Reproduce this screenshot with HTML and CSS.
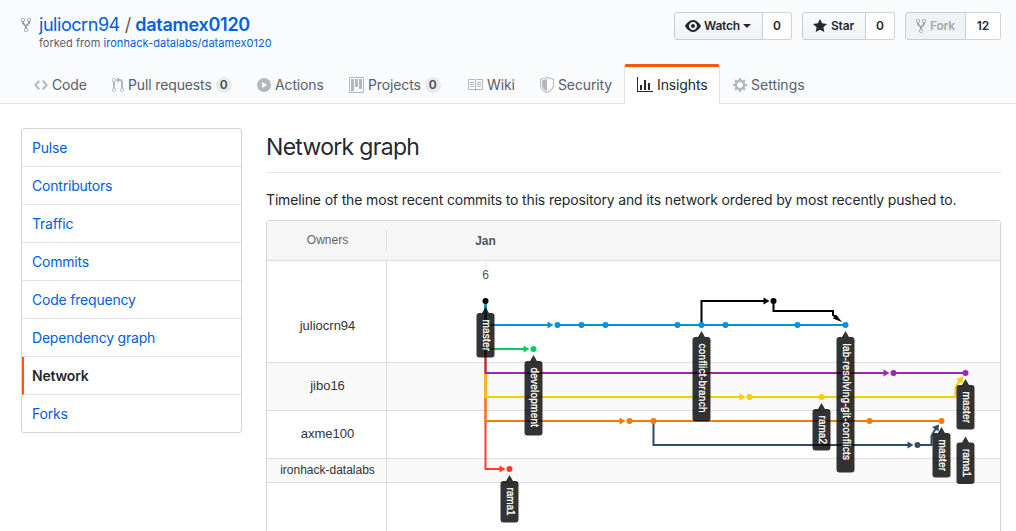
FILE: index.html
```html
<!DOCTYPE html>
<html lang="en">
<head>
<meta charset="utf-8">
<title>Network graph · juliocrn94/datamex0120</title>
<link rel="stylesheet" href="styles.css">
</head>
<body>
<header class="pagehead">
  <div class="repo-row">
    <div class="repo-title">
      <svg class="icon repo-icon" width="10" height="16" viewBox="0 0 10 16"><path fill-rule="evenodd" d="M8 1a1.993 1.993 0 0 0-1 3.72V6L5 8 3 6V4.72A1.993 1.993 0 0 0 2 1a1.993 1.993 0 0 0-1 3.72V6.5l3 3v1.78A1.993 1.993 0 0 0 5 15a1.993 1.993 0 0 0 1-3.72V9.5l3-3V4.72A1.993 1.993 0 0 0 8 1zM2 4.2C1.34 4.2.8 3.65.8 3c0-.65.55-1.2 1.2-1.2.65 0 1.2.55 1.2 1.2 0 .65-.55 1.2-1.2 1.2zm3 10c-.66 0-1.2-.55-1.2-1.2 0-.65.55-1.2 1.2-1.2.65 0 1.2.55 1.2 1.2 0 .65-.55 1.2-1.2 1.2zm3-10c-.66 0-1.2-.55-1.2-1.2 0-.65.55-1.2 1.2-1.2.65 0 1.2.55 1.2 1.2 0 .65-.55 1.2-1.2 1.2z"/></svg>
      <div>
        <h1 class="repo-name"><a class="owner">juliocrn94</a><span class="slash">/</span><a class="name">datamex0120</a></h1>
        <div class="forked">forked from <a>ironhack-datalabs/datamex0120</a></div>
      </div>
    </div>
    <div class="actions">
      <div class="btn-group">
        <span class="btn btn-watch"><svg class="icon" width="16" height="16" viewBox="0 0 16 16"><path fill-rule="evenodd" d="M8.06 2C3 2 0 8 0 8s3 6 8.06 6C13 14 16 8 16 8s-3-6-7.94-6zM8 12c-2.2 0-4-1.78-4-4 0-2.2 1.8-4 4-4 2.22 0 4 1.8 4 4 0 2.22-1.78 4-4 4zm2-4c0 1.11-.89 2-2 2-1.11 0-2-.89-2-2 0-1.11.89-2 2-2 1.11 0 2 .89 2 2z"/></svg><span>Watch</span><i class="caret"></i></span><span class="count">0</span>
      </div>
      <div class="btn-group">
        <span class="btn btn-star"><svg class="icon" width="14" height="16" viewBox="0 0 14 16"><path d="M14 6l-4.9-.64L7 1 4.9 5.36 0 6l3.6 3.26L2.67 14 7 11.67 11.33 14l-.93-4.74L14 6z"/></svg><span>Star</span></span><span class="count">0</span>
      </div>
      <div class="btn-group">
        <span class="btn btn-fork"><svg class="icon" width="10" height="16" viewBox="0 0 10 16"><path fill-rule="evenodd" d="M8 1a1.993 1.993 0 0 0-1 3.72V6L5 8 3 6V4.72A1.993 1.993 0 0 0 2 1a1.993 1.993 0 0 0-1 3.72V6.5l3 3v1.78A1.993 1.993 0 0 0 5 15a1.993 1.993 0 0 0 1-3.72V9.5l3-3V4.72A1.993 1.993 0 0 0 8 1zM2 4.2C1.34 4.2.8 3.65.8 3c0-.65.55-1.2 1.2-1.2.65 0 1.2.55 1.2 1.2 0 .65-.55 1.2-1.2 1.2zm3 10c-.66 0-1.2-.55-1.2-1.2 0-.65.55-1.2 1.2-1.2.65 0 1.2.55 1.2 1.2 0 .65-.55 1.2-1.2 1.2zm3-10c-.66 0-1.2-.55-1.2-1.2 0-.65.55-1.2 1.2-1.2.65 0 1.2.55 1.2 1.2 0 .65-.55 1.2-1.2 1.2z"/></svg><span>Fork</span></span><span class="count count-wide">12</span>
      </div>
    </div>
  </div>
  <nav class="tabs">
    <a class="tab tab-code"><svg class="icon" width="14" height="16" viewBox="0 0 14 16"><path d="M9.5 3L8 4.5 11.5 8 8 11.5 9.5 13 14 8 9.5 3zm-5 0L0 8l4.5 5L6 11.5 2.5 8 6 4.5 4.5 3z"/></svg><span>Code</span></a>
    <a class="tab tab-pulls"><svg class="icon" width="12" height="16" viewBox="0 0 12 16"><path fill-rule="evenodd" d="M11 11.28V5c-.03-.78-.34-1.47-.94-2.06C9.46 2.35 8.78 2.03 8 2H7V0L4 3l3 3V4h1c.27.02.48.11.69.31.21.2.3.42.31.69v6.28A1.993 1.993 0 0 0 10 15a1.993 1.993 0 0 0 1-3.72zm-1 2.92c-.66 0-1.2-.55-1.2-1.2 0-.65.55-1.2 1.2-1.2.65 0 1.2.55 1.2 1.2 0 .65-.55 1.2-1.2 1.2zM4 3c0-1.11-.89-2-2-2a1.993 1.993 0 0 0-1 3.72v6.56A1.993 1.993 0 0 0 2 15a1.993 1.993 0 0 0 1-3.72V4.72c.59-.34 1-.98 1-1.72zm-.8 10c0 .66-.55 1.2-1.2 1.2-.65 0-1.2-.55-1.2-1.2 0-.65.55-1.2 1.2-1.2.65 0 1.2.55 1.2 1.2zM2 4.2C1.34 4.2.8 3.65.8 3c0-.65.55-1.2 1.2-1.2.65 0 1.2.55 1.2 1.2 0 .65-.55 1.2-1.2 1.2z"/></svg><span>Pull requests</span><b class="counter">0</b></a>
    <a class="tab tab-actions"><svg class="icon" width="14" height="16" viewBox="0 0 14 16"><path fill-rule="evenodd" d="M14 8A7 7 0 1 1 0 8a7 7 0 0 1 14 0zM5 5v6l5.2-3z"/></svg><span>Actions</span></a>
    <a class="tab tab-projects"><svg class="icon" width="15" height="16" viewBox="0 0 15 16"><path fill-rule="evenodd" d="M10 12h3V2h-3v10zm-4-2h3V2H6v8zm-4 4h3V2H2v12zm-1 1h13V1H1v14zM14 0H1a1 1 0 0 0-1 1v14a1 1 0 0 0 1 1h13a1 1 0 0 0 1-1V1a1 1 0 0 0-1-1z"/></svg><span>Projects</span><b class="counter">0</b></a>
    <a class="tab tab-wiki"><svg class="icon" width="16" height="16" viewBox="0 0 16 16"><path fill-rule="evenodd" d="M3 5h4v1H3V5zm0 3h4V7H3v1zm0 2h4V9H3v1zm11-5h-4v1h4V5zm0 2h-4v1h4V7zm0 2h-4v1h4V9zm2-6v9c0 .55-.45 1-1 1H9.5l-1 1-1-1H2c-.55 0-1-.45-1-1V3c0-.55.45-1 1-1h5.5l1 1 1-1H15c.55 0 1 .45 1 1zm-8 .5L7.5 3H2v9h6V3.5zm7-.5H9.5l-.5.5V12h6V3z"/></svg><span>Wiki</span></a>
    <a class="tab tab-security"><svg class="icon" width="14" height="16" viewBox="0 0 14 16"><path fill-rule="evenodd" d="M0 2l7-2 7 2v6.02C14 12.69 8.69 16 7 16c-1.69 0-7-3.31-7-7.98V2zm1 .75L7 1l6 1.75v5.268C13 12.104 8.449 15 7 15c-1.449 0-6-2.896-6-6.982V2.75zm1 .75L7 2v12c-1.207 0-5-2.482-5-5.985V3.5z"/></svg><span>Security</span></a>
    <a class="tab tab-insights selected"><svg class="icon" width="16" height="16" viewBox="0 0 16 16"><path d="M16 14v1H0V0h1v14h15zM5 13H3V8h2v5zm4 0H7V3h2v10zm4 0h-2V6h2v7z"/></svg><span>Insights</span></a>
    <a class="tab tab-settings"><svg class="icon" width="14" height="16" viewBox="0 0 14 16"><path fill-rule="evenodd" d="M14 8.77v-1.6l-1.94-.64-.45-1.09.88-1.84-1.13-1.13-1.81.91-1.09-.45-.69-1.92h-1.6l-.63 1.94-1.11.45-1.84-.88-1.13 1.13.91 1.81-.45 1.09L0 7.23v1.59l1.94.64.45 1.09-.88 1.84 1.13 1.13 1.81-.91 1.09.45.69 1.92h1.59l.63-1.94 1.11-.45 1.84.88 1.13-1.13-.92-1.81.47-1.09L14 8.75v.02zM7 11c-1.66 0-3-1.34-3-3s1.34-3 3-3 3 1.34 3 3-1.34 3-3 3z"/></svg><span>Settings</span></a>
  </nav>
</header>
<main class="content">
  <nav class="menu">
    <a class="menu-item">Pulse</a>
    <a class="menu-item">Contributors</a>
    <a class="menu-item">Traffic</a>
    <a class="menu-item">Commits</a>
    <a class="menu-item">Code frequency</a>
    <a class="menu-item">Dependency graph</a>
    <a class="menu-item current">Network</a>
    <a class="menu-item">Forks</a>
  </nav>
  <section class="main">
    <h2 class="heading">Network graph</h2>
    <p class="lead">Timeline of the most recent commits to this repository and its network ordered by most recently pushed to.</p>
    <div class="network">
      <div class="net-head"><span class="owners">Owners</span><span class="month">Jan</span></div>
      <div class="net-body">
        <div class="lane lane-5"><span class="lane-owner">juliocrn94</span></div>
        <div class="lane lane-2 shaded"><span class="lane-owner">jibo16</span></div>
        <div class="lane lane-2"><span class="lane-owner">axme100</span></div>
        <div class="lane lane-1 shaded"><span class="lane-owner small">ironhack-datalabs</span></div>
        <div class="lane lane-rest"><span class="lane-owner"></span></div>
        <svg class="canvas" width="613" height="270" viewBox="387 261 613 270">
          <rect x="485" y="261" width="2" height="6" fill="#eee"/>
          <text class="day" x="485.5" y="279" text-anchor="middle">6</text>
          <g class="line">
            <path stroke="#ff3b2a" d="M485.5 301V469H502"/>
            <path stroke="#f57c00" d="M485.5 301V421H622M629 421H941"/>
            <path stroke="#f9cb00" d="M485.5 301V397H742M749 397H955.5V388L960 380"/>
            <path stroke="#9c27b0" d="M485.5 301V373H886M893 373H965"/>
            <path stroke="#04ce61" d="M485.5 301V349H526"/>
            <path stroke="#0092e0" d="M485.5 301V325H550M557 325H845"/>
            <path stroke="#2f4b66" d="M653.5 421V445H910M917 445H931.5V436L936 428"/>
            <path stroke="#000" d="M701.5 325V301H766M773.5 301V311H833V315L837 318"/>
          </g>
          <g fill="#0092e0"><path d="M547.5 321.500v7l6-3.500z"/><circle cx="557.500" cy="325" r="3"/><circle cx="581.500" cy="325" r="3"/><circle cx="605.500" cy="325" r="3"/><circle cx="677.500" cy="325" r="3"/><circle cx="701.500" cy="325" r="3"/><circle cx="725.500" cy="325" r="3"/><circle cx="797.500" cy="325" r="3"/><circle cx="845.500" cy="325" r="3"/></g>
          <g fill="#04ce61"><path d="M523.5 345.500v7l6-3.500z"/><circle cx="533.500" cy="349" r="3"/></g>
          <g fill="#9c27b0"><path d="M883.500 369.500v7l6-3.500z"/><circle cx="893.500" cy="373" r="3"/><circle cx="965.500" cy="373" r="3"/></g>
          <g fill="#f9cb00"><path d="M739.500 393.500v7l6-3.500z"/><circle cx="749.500" cy="397" r="3"/><circle cx="821.500" cy="397" r="3"/><path d="M963 376.500L956 379 962.500 383.500z"/></g>
          <g fill="#f57c00"><path d="M619.500 417.500v7l6-3.500z"/><circle cx="629.500" cy="421" r="3"/><circle cx="653.500" cy="421" r="3"/><circle cx="869.500" cy="421" r="3"/><circle cx="941.500" cy="421" r="3"/></g>
          <g fill="#2f4b66"><path d="M907.500 441.500v7l6-3.500z"/><circle cx="917.500" cy="445" r="3"/><path d="M939 424.500L932 427 938.500 431.500z"/></g>
          <g fill="#ff3b2a"><path d="M499.500 465.500v7l6-3.500z"/><circle cx="509.500" cy="469" r="3"/></g>
          <g fill="#000"><path d="M763.500 297.500v7l6-3.500z"/><circle cx="773.500" cy="301" r="3"/><circle cx="485.500" cy="301" r="3"/><path d="M842 322L833 318.500 836 314.500z"/></g>
          <g class="flag">
            <path d="M485.500 307l3.500 6h2.500a3 3 0 0 1 3 3v38.500a3 3 0 0 1-3 3h-12a3 3 0 0 1-3-3V316a3 3 0 0 1 3-3h2.500z"/>
            <path d="M533.500 355l3.500 6h2.500a3 3 0 0 1 3 3v68.500a3 3 0 0 1-3 3h-12a3 3 0 0 1-3-3V364a3 3 0 0 1 3-3h2.500z"/>
            <path d="M509.500 475l3.500 6h2.500a3 3 0 0 1 3 3v35.500a3 3 0 0 1-3 3h-12a3 3 0 0 1-3-3V484a3 3 0 0 1 3-3h2.500z"/>
            <path d="M701.500 331l3.500 6h2.500a3 3 0 0 1 3 3v78.500a3 3 0 0 1-3 3h-12a3 3 0 0 1-3-3V340a3 3 0 0 1 3-3h2.500z"/>
            <path d="M821.500 403l3.500 6h2.500a3 3 0 0 1 3 3v35.500a3 3 0 0 1-3 3h-12a3 3 0 0 1-3-3V412a3 3 0 0 1 3-3h2.500z"/>
            <path d="M845.500 331l3.500 6h2.500a3 3 0 0 1 3 3v129.500a3 3 0 0 1-3 3h-12a3 3 0 0 1-3-3V340a3 3 0 0 1 3-3h2.500z"/>
            <path d="M965.500 379l3.500 6h2.500a3 3 0 0 1 3 3v38.500a3 3 0 0 1-3 3h-12a3 3 0 0 1-3-3V388a3 3 0 0 1 3-3h2.500z"/>
            <path d="M941.500 427l3.500 6h2.500a3 3 0 0 1 3 3v38.500a3 3 0 0 1-3 3h-12a3 3 0 0 1-3-3V436a3 3 0 0 1 3-3h2.500z"/>
            <path d="M965.500 436.500l3.500 6h2.500a3 3 0 0 1 3 3v35.500a3 3 0 0 1-3 3h-12a3 3 0 0 1-3-3V445.500a3 3 0 0 1 3-3h2.500z"/>
          </g>
          <g class="flag-text">
            <text transform="translate(482.500 319.500) rotate(90)" textLength="31.500">master</text>
            <text transform="translate(530.500 367.500) rotate(90)" textLength="59.500">development</text>
            <text transform="translate(506.500 487.500) rotate(90)" textLength="28">rama1</text>
            <text transform="translate(698.500 343.500) rotate(90)" textLength="69">conflict-branch</text>
            <text transform="translate(818.500 415.500) rotate(90)" textLength="28.500">rama2</text>
            <text transform="translate(842.500 343.500) rotate(90)" textLength="116.500">lab-resolving-git-conflicts</text>
            <text transform="translate(962.500 391.500) rotate(90)" textLength="31.500">master</text>
            <text transform="translate(938.500 439.500) rotate(90)" textLength="31.500">master</text>
            <text transform="translate(962.500 449) rotate(90)" textLength="28">rama1</text>
          </g>
        </svg>
      </div>
    </div>
  </section>
</main>
</body>
</html>
```
FILE: styles.css
```css
* { box-sizing: border-box; }
body {
  margin: 0;
  width: 1016px;
  height: 531px;
  overflow: hidden;
  background: #fff;
  color: #24292e;
  font: 14px/20px Inter, "Liberation Sans", sans-serif;
}
a { color: #0060df; text-decoration: none; }
.icon { display: block; flex: none; fill: currentColor; }

.pagehead {
  display: flex;
  flex-direction: column;
  justify-content: space-between;
  height: 104px;
  background: #fafbfc;
  border-bottom: 1px solid #e1e4e8;
}
.repo-row { display: flex; justify-content: space-between; padding: 12px 15px 0 21px; }
.repo-title { display: flex; gap: 8px; }
.repo-icon { margin-top: 5px; color: #959da5; }
.repo-name { display: flex; margin: 0; font-size: 18px; line-height: 26px; font-weight: 400; }
.owner { letter-spacing: -.45px; }
.slash { margin: 0 4px 0 5px; color: #586069; }
.name { font-weight: 600; letter-spacing: -.27px; }
.forked { margin-top: -1px; font-size: 11px; line-height: 13px; letter-spacing: .04px; color: #586069; }

.actions { display: flex; gap: 10px; font-size: 12px; font-weight: 600; }
.btn-group { display: flex; height: 28px; }
.btn {
  display: flex;
  align-items: center;
  gap: 4px;
  padding-left: 10px;
  border: 1px solid #c9cdd0;
  border-radius: 3px 0 0 3px;
  background: linear-gradient(#fafbfc, #eff3f6);
  letter-spacing: -.2px;
}
.btn-watch { width: 89px; gap: 3px; }
.btn-star { width: 64px; gap: 4px; }
.btn-fork { width: 61px; background: #eff3f6; color: #a2a7ab; }
.caret { border: 4px solid transparent; border-top-color: currentColor; border-bottom: 0; }
.count {
  width: 29px;
  line-height: 26px;
  text-align: center;
  background: #fff;
  border: 1px solid #d1d3d5;
  border-left: 0;
  border-radius: 0 3px 3px 0;
}
.count-wide { width: 35px; }

.tabs { display: flex; height: 40px; padding-left: 22px; margin-bottom: -1px; }
.tab { display: flex; align-items: center; gap: 4px; padding: 2px 0 0 12px; color: #586069; letter-spacing: -.13px; white-space: nowrap; }
.tab .icon { color: #b4b8bc; }
.tab-code { width: 78px; }
.tab-pulls { width: 145px; }
.tab-actions { width: 92px; }
.tab-projects { width: 119px; }
.tab-wiki { width: 71px; }
.tab-wiki .icon { margin-left: -1px; }
.tab-security { width: 97px; }
.tab-security .icon { margin-left: 1px; }
.tab-insights { width: 96px; }
.tab-settings { width: 100px; padding-left: 13px; letter-spacing: 0; }
.tab.selected {
  padding: 0 0 1px 12px;
  color: #24292e;
  background: #fff;
  border: 1px solid #e1e4e8;
  border-top: 3px solid #f9570a;
  border-bottom: 0;
  border-radius: 3px 3px 0 0;
}
.tab.selected .icon { color: #24292e; }
.counter {
  width: 16px;
  height: 16px;
  border-radius: 8px;
  background: #e9eaec;
  color: #444d56;
  font-size: 12px;
  line-height: 16px;
  font-weight: 600;
  text-align: center;
}

.content { display: flex; gap: 24px; padding: 24px 15px 0 21px; }
.menu { flex: none; align-self: flex-start; width: 221px; border: 1px solid #d1d5da; border-radius: 3px; letter-spacing: -.2px; }
.menu-item { display: block; height: 38px; padding: 9px 10px; border-bottom: 1px solid #e1e4e8; }
.menu-item:last-child { height: 37px; border-bottom: 0; }
.menu-item.current { padding-left: 8px; border-left: 2px solid #f9570a; color: #24292e; font-weight: 600; }

.main { width: 735px; }
.heading { margin: 0; height: 45px; padding-top: 1px; border-bottom: 1px solid #e1e4e8; font-size: 23px; line-height: 36px; font-weight: 400; letter-spacing: -.7px; }
.lead { margin: 17px 0 10px; letter-spacing: -.153px; white-space: nowrap; }
.network { height: 330px; border: 1px solid #d1d5da; border-radius: 3px; font-family: "Liberation Sans", Arial, sans-serif; }
.net-head { display: flex; align-items: center; height: 40px; border-bottom: 1px solid #ddd; background: #f6f6f6; font-size: 12px; }
.owners { width: 120px; height: 20px; padding-left: 2px; border-right: 1px solid #ddd; line-height: 18px; text-align: center; color: #666; }
.month { width: 197px; text-align: center; font-weight: 700; color: #555; }
.net-body { position: relative; }
.lane { border-bottom: 1px solid #ddd; }
.lane-5 { height: 102px; }
.lane-2 { height: 48px; }
.lane-1 { height: 24px; }
.lane-rest { height: 60px; }
.shaded { background: #f9f9f9; }
.lane-owner { display: flex; align-items: center; justify-content: center; width: 120px; height: 100%; padding: 0 0 2px 2px; border-right: 1px solid #ddd; font-size: 13px; color: #333; }
.lane-5 .lane-owner { padding: 28px 0 0 2px; }
.small { font-size: 12px; }
.canvas { position: absolute; top: 0; left: 120px; }
.day { font-size: 12px; fill: #555; }
.line path { fill: none; stroke-width: 2; }
.flag path { fill: #000; fill-opacity: .8; }
.flag-text { font-size: 10px; fill: #fff; stroke: #fff; stroke-width: .3; }
```
